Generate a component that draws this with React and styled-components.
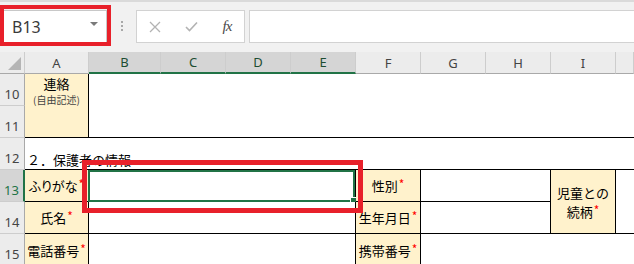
import React from 'react';
import styled, { createGlobalStyle } from 'styled-components';

const GlobalStyle = createGlobalStyle`
  body {
    margin: 0;
    background: #fff;
    overflow: hidden;
  }
`;

const GREEN = '#217346';
const RED = '#e8202a';
const YELLOW = '#fff2cc';

const Window = styled.div`
  position: relative;
  width: 634px;
  height: 264px;
  overflow: hidden;
  font-family: "Noto Sans CJK JP", "Noto Sans", sans-serif;
`;

const Toolbar = styled.div`
  display: flex;
  align-items: flex-start;
  height: 52px;
  box-sizing: border-box;
  padding: 8px 0 0 3px;
  background: #f1f1f1;
  border-top: 2px solid #dadada;
`;

const NameBox = styled.div`
  display: flex;
  align-items: center;
  justify-content: space-between;
  box-sizing: border-box;
  width: 104px;
  height: 33px;
  padding: 0 8px 0 8px;
  background: #fff;
  border: 1px solid #c8c8c8;
  font-family: "Noto Sans", sans-serif;
  font-size: 16px;
  color: #3a3a3a;
`;

const DropArrow = styled.span`
  width: 0;
  height: 0;
  border-left: 4px solid transparent;
  border-right: 4px solid transparent;
  border-top: 4px solid #7a7a7a;
  margin-top: -6px;
`;

const Grip = styled.div`
  display: flex;
  flex-direction: column;
  gap: 2px;
  margin: 11px 13px 0 14px;

  span {
    width: 2px;
    height: 2px;
    background: #a8a8a8;
  }
`;

const FormulaButtons = styled.div`
  display: grid;
  grid-template-columns: repeat(3, 36px);
  align-items: center;
  justify-items: center;
  box-sizing: border-box;
  width: 109px;
  height: 33px;
  background: #fff;
  border: 1px solid #d2d2d2;
`;

const Fx = styled.span`
  font-family: "Liberation Serif", serif;
  font-style: italic;
  font-size: 15px;
  color: #4a4a4a;
  letter-spacing: -1px;
`;

const FormulaInput = styled.div`
  flex: 1;
  height: 33px;
  margin-left: 4px;
  box-sizing: border-box;
  background: #fff;
  border: 1px solid #d2d2d2;
  border-right: none;
`;

const Sheet = styled.div`
  display: grid;
  grid-template-columns: 25px 64px 72px 65px 65px 65px 65px 65px 65px 65px 1fr;
  grid-template-rows: 22px repeat(6, 32px);
`;

const ColHeader = styled.div`
  display: flex;
  align-items: center;
  justify-content: center;
  box-sizing: border-box;
  background: ${(p) => (p.$selected ? '#d5d5d5' : '#ececec')};
  border-right: 1px solid #cdcdcd;
  border-bottom: ${(p) => (p.$selected ? `2px solid ${GREEN}` : '1px solid #a9a9a9')};
  font-family: "Noto Sans", sans-serif;
  font-size: 13px;
  color: ${(p) => (p.$selected ? '#1d4d32' : '#444')};
`;

const Corner = styled(ColHeader)`
  align-items: flex-end;
  justify-content: flex-end;
  padding: 0 3px 3px 0;
`;

const RowHeader = styled.div`
  display: flex;
  align-items: flex-end;
  justify-content: center;
  box-sizing: border-box;
  padding-bottom: 4px;
  background: ${(p) => (p.$selected ? '#d5d5d5' : '#ececec')};
  border-bottom: 1px solid #cdcdcd;
  border-right: ${(p) => (p.$selected ? `2px solid ${GREEN}` : '1px solid #a9a9a9')};
  font-family: "Noto Sans", sans-serif;
  font-size: 13px;
  line-height: 13px;
  color: ${(p) => (p.$selected ? GREEN : '#444')};
`;

const Cell = styled.div`
  position: relative;
  display: flex;
  flex-direction: column;
  align-items: center;
  justify-content: center;
  box-sizing: border-box;
  grid-column: ${(p) => p.$col};
  grid-row: ${(p) => p.$row};
  background: ${(p) => (p.$label ? YELLOW : '#fff')};
  border-right: ${(p) => (p.$r ? '1px solid #000' : 'none')};
  border-bottom: ${(p) => (p.$b ? '1px solid #000' : 'none')};
  font-size: 13px;
  line-height: 19px;
  color: #000;
  white-space: nowrap;
`;

const NoteCell = styled(Cell)`
  justify-content: flex-start;
`;

const Note = styled.span`
  font-size: 10px;
  line-height: 14px;
  color: #444;
`;

const SectionCell = styled(Cell)`
  align-items: flex-start;
  justify-content: flex-end;
  padding: 0 0 1px 2px;
  line-height: 16px;
`;

const Kana = styled.span`
  font-feature-settings: "palt";
`;

const Req = styled.span`
  color: #ff0000;
  font-size: 12px;
  margin-left: 1px;
  position: relative;
  top: -2px;
`;

const Selection = styled.div`
  position: absolute;
  top: 0;
  left: -1px;
  right: 0;
  bottom: -1px;
  border: 2px solid ${GREEN};
`;

const FillHandle = styled.div`
  position: absolute;
  right: -4px;
  bottom: -4px;
  width: 5px;
  height: 5px;
  background: ${GREEN};
  border: 1px solid #fff;
`;

const Highlight = styled.div`
  position: absolute;
  box-sizing: border-box;
  border: ${(p) => p.$w}px solid ${RED};
  pointer-events: none;
`;

const columns = ['A', 'B', 'C', 'D', 'E', 'F', 'G', 'H', 'I', ''];
const selectedCols = ['B', 'C', 'D', 'E'];

function Label({ children, kana }) {
  return (
    <span>
      {kana ? <Kana>{children}</Kana> : children}
      <Req>*</Req>
    </span>
  );
}

export default function App() {
  return (
    <Window>
      <GlobalStyle />
      <Toolbar>
        <NameBox>
          B13
          <DropArrow />
        </NameBox>
        <Grip>
          <span />
          <span />
          <span />
        </Grip>
        <FormulaButtons>
          <svg width="12" height="12" viewBox="0 0 12 12">
            <path d="M1 1 L11 11 M11 1 L1 11" stroke="#b3b3b3" strokeWidth="1.3" fill="none" />
          </svg>
          <svg width="13" height="11" viewBox="0 0 13 11">
            <path d="M1 6 L4.5 9.5 L12 1.5" stroke="#b3b3b3" strokeWidth="1.6" fill="none" />
          </svg>
          <Fx>fx</Fx>
        </FormulaButtons>
        <FormulaInput />
      </Toolbar>

      <Sheet>
        <Corner>
          <svg width="13" height="13" viewBox="0 0 13 13">
            <polygon points="13,0 13,13 0,13" fill="#b5b5b5" />
          </svg>
        </Corner>
        {columns.map((c, i) => (
          <ColHeader key={i} $selected={selectedCols.includes(c)}>{c}</ColHeader>
        ))}

        <RowHeader style={{ gridColumn: 1, gridRow: 2 }}>10</RowHeader>
        <RowHeader style={{ gridColumn: 1, gridRow: 3 }}>11</RowHeader>
        <RowHeader style={{ gridColumn: 1, gridRow: 4 }}>12</RowHeader>
        <RowHeader $selected style={{ gridColumn: 1, gridRow: 5 }}>13</RowHeader>
        <RowHeader style={{ gridColumn: 1, gridRow: 6 }}>14</RowHeader>
        <RowHeader style={{ gridColumn: 1, gridRow: 7 }}>15</RowHeader>

        <NoteCell $col="2" $row="2 / 4" $label $r $b>
          <span>連絡</span>
          <Note>(自由記述)</Note>
        </NoteCell>
        <Cell $col="3 / -1" $row="2 / 4" $b />

        <SectionCell $col="2 / -1" $row="4" $b>２．保護者の情報</SectionCell>

        <Cell $col="2" $row="5" $label $r $b><Label kana>ふりがな</Label></Cell>
        <Cell $col="3 / 7" $row="5" $r $b>
          <Selection>
            <FillHandle />
          </Selection>
        </Cell>
        <Cell $col="7" $row="5" $label $r $b><Label>性別</Label></Cell>
        <Cell $col="8 / 10" $row="5" $r $b />
        <Cell $col="10" $row="5 / 7" $label $r $b>
          <span>児童との</span>
          <Label>続柄</Label>
        </Cell>
        <Cell $col="11" $row="5 / 7" $b />

        <Cell $col="2" $row="6" $label $r $b><Label>氏名</Label></Cell>
        <Cell $col="3 / 7" $row="6" $r $b />
        <Cell $col="7" $row="6" $label $r $b><Label>生年月日</Label></Cell>
        <Cell $col="8 / 10" $row="6" $r $b />

        <Cell $col="2" $row="7" $label $r><Label>電話番号</Label></Cell>
        <Cell $col="3 / 7" $row="7" $r />
        <Cell $col="7" $row="7" $label $r><Label>携帯番号</Label></Cell>
        <Cell $col="8 / -1" $row="7" />
      </Sheet>

      <Highlight $w={4} style={{ left: 0, top: 5, width: 111, height: 41 }} />
      <Highlight $w={5} style={{ left: 82, top: 160, width: 281, height: 53 }} />
    </Window>
  );
}
